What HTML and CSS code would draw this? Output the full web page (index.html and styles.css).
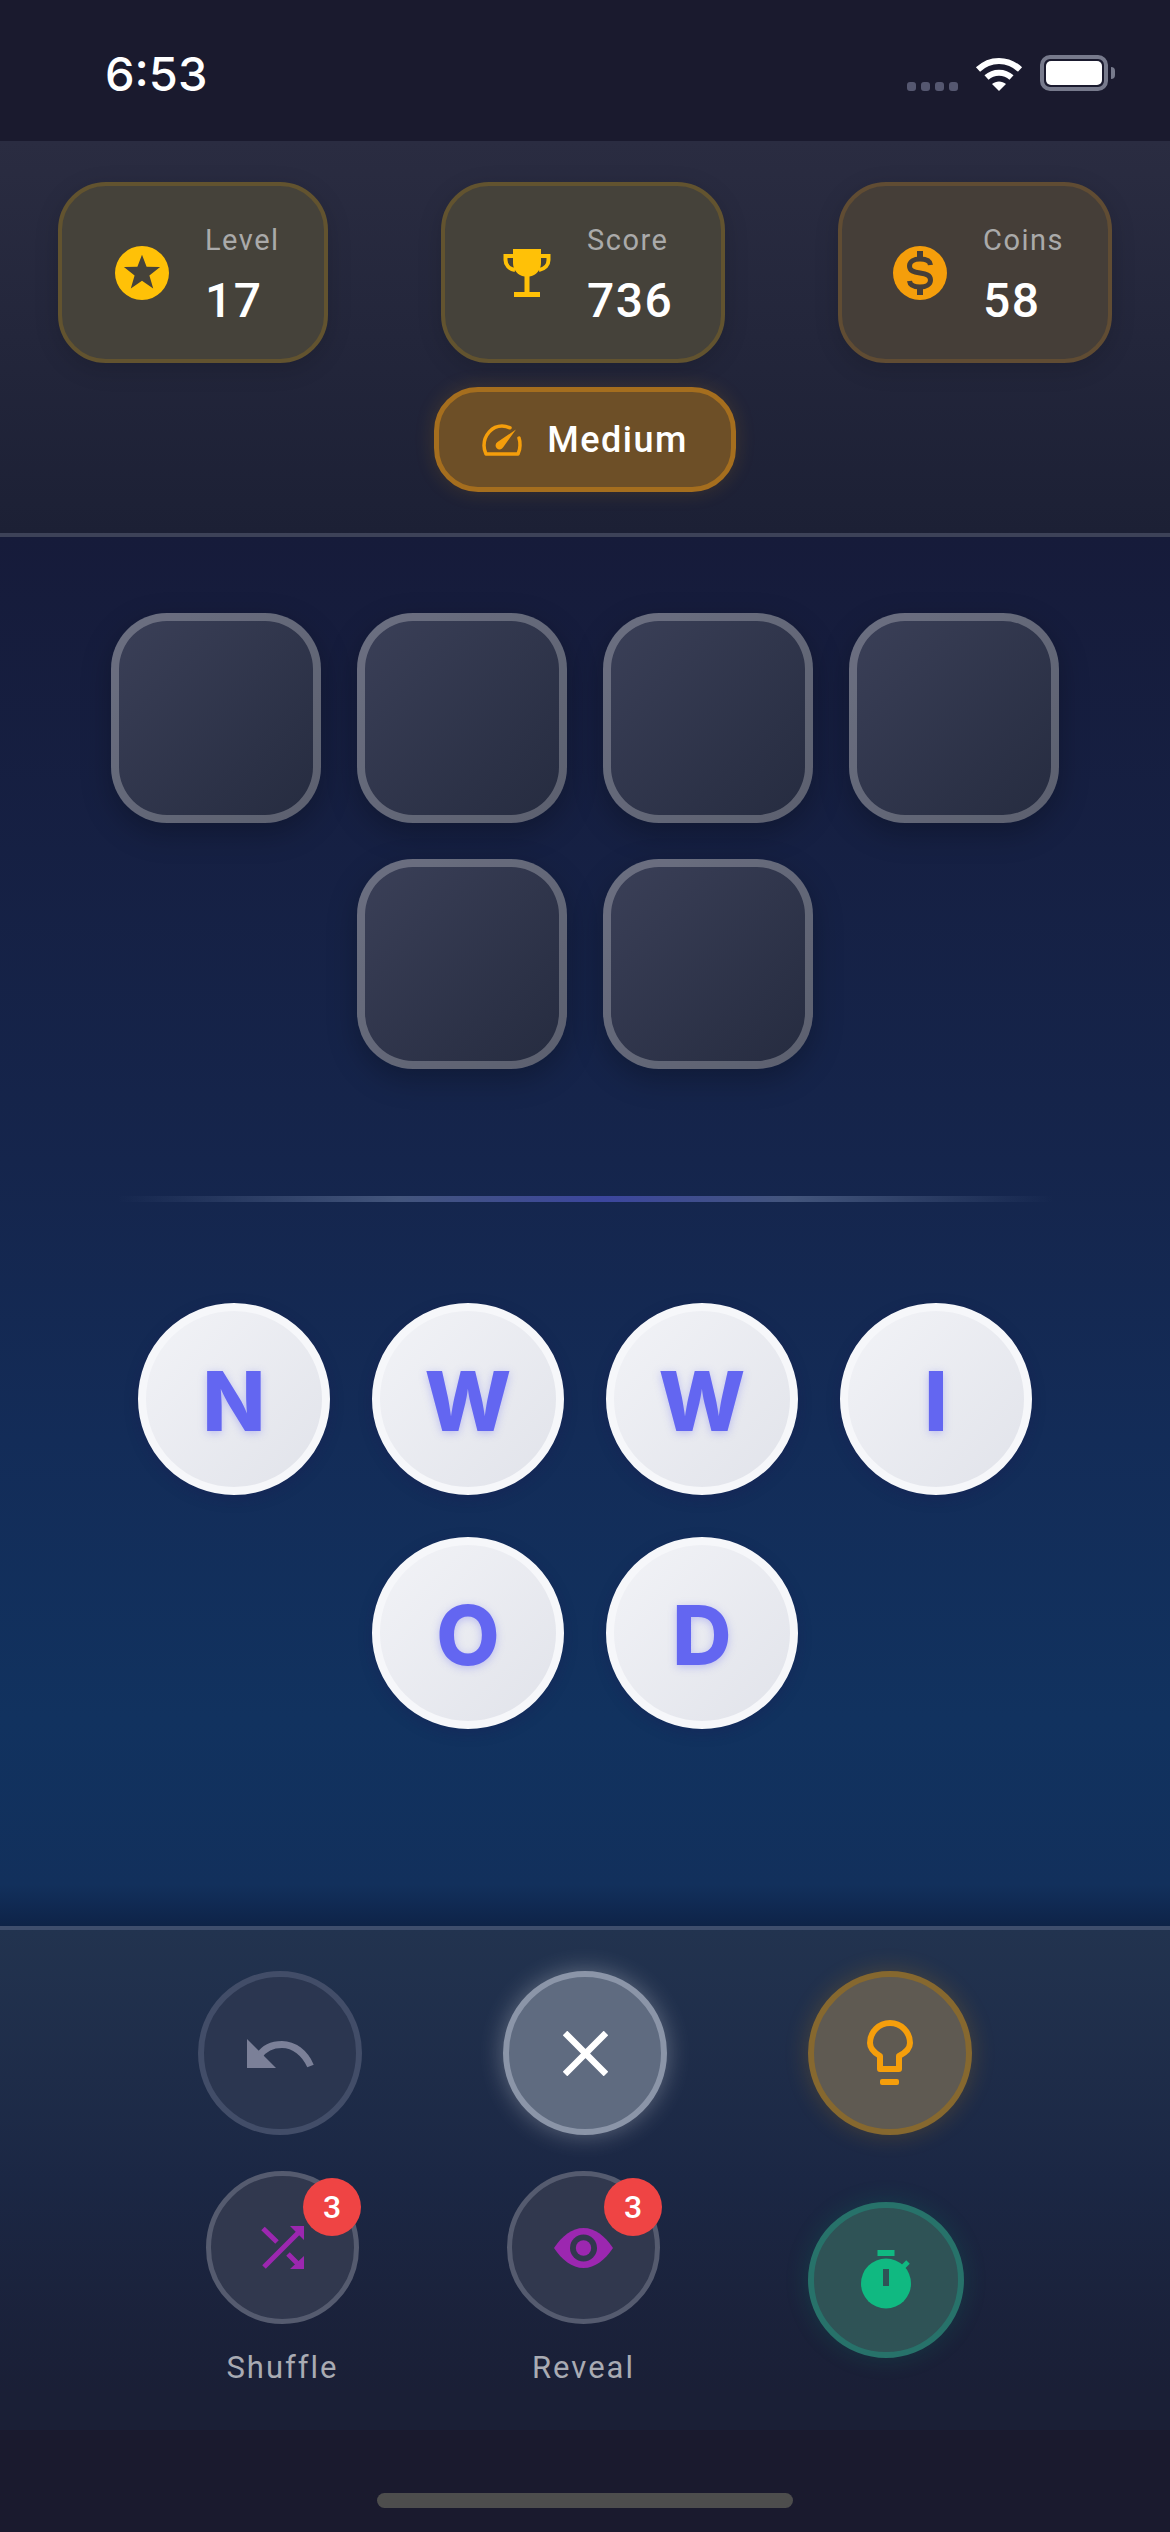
FILE: index.html
```html
<!DOCTYPE html>
<html>
<head>
    <title>Word Game</title>
    <link rel="stylesheet" href="styles.css">
</head>
<body>
    <div class="screen">
        <div class="status-bar">
            <div class="time">6:53</div>
            <div class="status-icons">
                <div class="signal"><span></span><span></span><span></span><span></span></div>
                <svg class="wifi" width="48" height="35" viewBox="0 0 48 35">
                    <path d="M3 13.5C15 2 33 2 45 13.5" fill="none" stroke="#fff" stroke-width="6"/>
                    <path d="M11.5 21.5C18.5 15 29.5 15 36.5 21.5" fill="none" stroke="#fff" stroke-width="6"/>
                    <path d="M17 28C21 24.5 27 24.5 31 28L24 35Z" fill="#fff"/>
                </svg>
                <div class="battery"><div class="battery-level"></div></div>
            </div>
        </div>

        <div class="stats-panel">
            <div class="stats-row">
                <div class="stat-card stat-level">
                    <svg width="54" height="54" viewBox="0 0 54 54">
                        <path fill="#ffc107" fill-rule="evenodd" d="M27 0a27 27 0 1 0 0 54a27 27 0 1 0 0-54ZM27 8.7L31.6 20.7L45.1 21.1L34.4 29.4L38.2 42.5L27 34.8L15.8 42.5L19.6 29.4L8.9 21.1L22.4 20.7Z"/>
                    </svg>
                    <div class="stat-text">
                        <div class="stat-label">Level</div>
                        <div class="stat-value">17</div>
                    </div>
                </div>
                <div class="stat-card stat-score">
                    <svg width="48" height="48" viewBox="0 0 48 48">
                        <path fill="#ffc107" d="M10 0H38V14C38 21 33 26.500 26.500 27.500V43H37V48H11V43H21.500V27.500C15 26.500 10 21 10 14Z"/>
                        <path fill="none" stroke="#ffc107" stroke-width="4" d="M11 7H2.500V11C2.500 16 6 20 12 21M37 7H45.500V11C45.500 16 42 20 36 21"/>
                    </svg>
                    <div class="stat-text">
                        <div class="stat-label">Score</div>
                        <div class="stat-value">736</div>
                    </div>
                </div>
                <div class="stat-card stat-coins">
                    <svg width="54" height="54" viewBox="0 0 54 54">
                        <circle cx="27" cy="27" r="27" fill="#f59e0b"/>
                        <path fill="none" stroke="#453e38" stroke-width="5" d="M37.500 19C37 14.500 32.500 13 27 13C21 13 16.500 15.500 16.500 20C16.500 25 21 26 27 27C33 28 37.500 29 37.500 34C37.500 38.500 33 41 27 41C21.500 41 17 39.500 16.500 35"/>
                        <path fill="#453e38" d="M24 5H30V13H24ZM24 41H30V49H24Z"/>
                    </svg>
                    <div class="stat-text">
                        <div class="stat-label">Coins</div>
                        <div class="stat-value">58</div>
                    </div>
                </div>
            </div>
            <div class="difficulty">
                <svg width="40" height="32" viewBox="0 0 40 32">
                    <path fill="none" stroke="#f59e0b" stroke-width="3.500" stroke-linejoin="round" stroke-linecap="round" d="M28 3.800C25.500 2.600 23 2 20 2C10 2 2 11 2 21.500C2 24.500 2.500 27 4 30H36C37.500 27 38 24.500 38 21.500C38 19 37.800 16 37 14"/>
                    <path fill="#f59e0b" d="M34 5.500L21 23.500A4 4 0 1 1 15.500 18Z"/>
                </svg>
                <span>Medium</span>
            </div>
        </div>

        <div class="board">
            <div class="tile-row">
                <div class="tile"></div>
                <div class="tile"></div>
                <div class="tile"></div>
                <div class="tile"></div>
            </div>
            <div class="tile-row">
                <div class="tile"></div>
                <div class="tile"></div>
            </div>

            <div class="divider"></div>

            <div class="letter-grid">
                <div class="letter-row">
                    <div class="letter">N</div>
                    <div class="letter">W</div>
                    <div class="letter">W</div>
                    <div class="letter">I</div>
                </div>
                <div class="letter-row">
                    <div class="letter">O</div>
                    <div class="letter">D</div>
                </div>
            </div>
        </div>

        <div class="controls">
            <div class="control-row">
                <div class="round-btn btn-undo">
                    <svg width="67" height="29" viewBox="0 0 67 29">
                        <path fill="#7b8098" d="M0 0V29H29Z"/>
                        <path fill="none" stroke="#7b8098" stroke-width="7" d="M12 17C18 8 27 5.500 35 5.500C47 5.500 58 14 63.500 27"/>
                    </svg>
                </div>
                <div class="round-btn btn-clear">
                    <svg width="45" height="45" viewBox="0 0 45 45">
                        <path fill="none" stroke="#fff" stroke-width="6.500" d="M2 2L43 43M43 2L2 43"/>
                    </svg>
                </div>
                <div class="round-btn btn-hint">
                    <svg width="46" height="66" viewBox="0 0 46 66">
                        <path fill="none" stroke="#f59e0b" stroke-width="6" stroke-linejoin="round" d="M13 36C7 32.500 3 28 3 23A20 20 0 1 1 43 23C43 28 39 32.500 32 36V49H13Z"/>
                        <rect x="13" y="59" width="19" height="6" rx="2" fill="#f59e0b"/>
                    </svg>
                </div>
            </div>
            <div class="powerup-row">
                <div class="powerup">
                    <div class="powerup-btn">
                        <svg width="43" height="43" viewBox="0 0 43 43">
                            <path fill="none" stroke="#9c27b0" stroke-width="5" d="M3 41L38 6M2 2.500L16 16M27 28L40 41"/>
                            <path fill="#9c27b0" d="M29 0H43V14ZM43 30V43H29Z"/>
                        </svg>
                        <div class="badge">3</div>
                    </div>
                    <div class="powerup-label">Shuffle</div>
                </div>
                <div class="powerup">
                    <div class="powerup-btn">
                        <svg width="59" height="40" viewBox="0 0 59 40">
                            <path fill="#9c27b0" d="M0 20C8 8 18 0 29.500 0C41 0 51 8 59 20C51 32 41 40 29.500 40C18 40 8 32 0 20Z"/>
                            <circle cx="29.500" cy="20" r="13.500" fill="#31384e"/>
                            <circle cx="29.500" cy="20" r="7.700" fill="#9c27b0"/>
                        </svg>
                        <div class="badge">3</div>
                    </div>
                    <div class="powerup-label">Reveal</div>
                </div>
                <div class="powerup">
                    <div class="round-btn btn-timer">
                        <svg width="50" height="59" viewBox="0 0 50 59">
                            <rect x="16.500" y="0" width="17" height="6" fill="#10b981"/>
                            <circle cx="25" cy="33.500" r="25" fill="#10b981"/>
                            <path fill="none" stroke="#10b981" stroke-width="5" d="M40 19L47 12"/>
                            <rect x="22" y="19" width="6" height="17" fill="#2f5356"/>
                        </svg>
                    </div>
                </div>
            </div>
        </div>

        <div class="home-area">
            <div class="home-indicator"></div>
        </div>
    </div>
</body>
</html>
```

FILE: styles.css
```css
body {
    margin: 0;
    background-color: #1a1a2e;
    font-family: Roboto, "Liberation Sans", sans-serif;
    color: #fff;
}

.screen {
    display: flex;
    flex-direction: column;
    height: 100vh;
}

/* Status bar */
.status-bar {
    height: 141px;
    box-sizing: border-box;
    padding: 0 62px 50px 105px;
    display: flex;
    justify-content: space-between;
    align-items: flex-end;
    background-color: #1a1a2e;
}

.time {
    font-family: Inter, sans-serif;
    font-size: 47px;
    font-weight: 500;
    line-height: 34px;
}

.status-icons {
    display: flex;
    align-items: flex-end;
    gap: 17px;
}

.signal {
    display: flex;
    gap: 5px;
}

.signal span {
    width: 9px;
    height: 9px;
    border-radius: 3px;
    background-color: #555770;
}

.battery {
    position: relative;
    width: 68px;
    height: 36px;
    box-sizing: border-box;
    border: 4px solid #777a8c;
    border-radius: 10px;
    padding: 2px;
}

.battery::after {
    content: "";
    position: absolute;
    right: -11px;
    top: 8px;
    width: 4px;
    height: 12px;
    border-radius: 0 6px 6px 0;
    background-color: #777a8c;
}

.battery-level {
    height: 100%;
    background-color: #fff;
    border-radius: 5px;
}

/* Stats */
.stats-panel {
    padding: 41px 58px;
    border-bottom: 4px solid #3d4258;
    background: linear-gradient(180deg, #2a2c41, #1c2035);
    display: flex;
    flex-direction: column;
    align-items: center;
    gap: 24px;
}

.stats-row {
    align-self: stretch;
    display: grid;
    grid-template-columns: 270px 284px 274px;
    justify-content: space-between;
}

.stat-card {
    height: 181px;
    box-sizing: border-box;
    border: 4px solid #62532f;
    border-radius: 48px;
    background-color: #45423a;
    box-shadow: 0 6px 24px rgba(0, 0, 0, 0.15);
    display: flex;
    align-items: center;
    justify-content: center;
    gap: 36px;
}

.stat-coins {
    border-color: #604c33;
    background-color: #453e38;
}

.stat-text {
    width: 66px;
    margin-top: 3px;
}

.stat-score .stat-text {
    width: 76px;
}

.stat-coins .stat-text {
    width: 74px;
}

.stat-label {
    font-size: 29px;
    line-height: 36px;
    letter-spacing: 1.5px;
    color: #aaaaaa;
}

.stat-value {
    margin-top: 17px;
    font-size: 48px;
    font-weight: 500;
    line-height: 52px;
    letter-spacing: 1.5px;
}

.difficulty {
    width: 302px;
    height: 105px;
    box-sizing: border-box;
    border: 5px solid #a56e1e;
    border-radius: 44px;
    background-color: #6d4f27;
    box-shadow: 0 0 20px rgba(245, 158, 11, 0.15);
    display: flex;
    align-items: center;
    justify-content: center;
    gap: 25px;
    font-size: 36px;
    font-weight: 500;
    letter-spacing: 1.5px;
}

/* Board */
.board {
    flex: 1;
    padding-top: 76px;
    background: linear-gradient(180deg, #161b3a 0%, #15254c 45%, #132c58 65%, #11325f 85%, #12305c 97%, #0e2348 100%);
}

.tile-row {
    display: flex;
    justify-content: center;
    gap: 36px;
    margin-bottom: 36px;
}

.tile {
    width: 210px;
    height: 210px;
    box-sizing: border-box;
    border: 8px solid rgba(255, 255, 255, 0.25);
    border-radius: 56px;
    background: linear-gradient(135deg, #3b4058, #252b3f) border-box;
    box-shadow: 0 10px 30px rgba(0, 0, 0, 0.25);
}

.divider {
    height: 6px;
    margin: 127px 10% 0;
    background: linear-gradient(90deg, transparent, #43557c 30%, #3c469e 52%, #43557c 72%, transparent);
}

.letter-grid {
    margin-top: 101px;
    display: flex;
    flex-direction: column;
    gap: 42px;
}

.letter-row {
    display: flex;
    justify-content: center;
    gap: 42px;
}

.letter {
    width: 192px;
    height: 192px;
    box-sizing: border-box;
    border: 8px solid #f6f7fa;
    border-radius: 50%;
    background: linear-gradient(135deg, #f2f3f7, #e1e3ea);
    box-shadow: 0 4px 14px rgba(30, 20, 80, 0.25);
    display: flex;
    align-items: center;
    justify-content: center;
    padding-top: 5px;
    font-family: Inter, sans-serif;
    font-size: 82px;
    font-weight: 800;
    color: #6366f1;
    text-shadow: 0 2px 8px rgba(99, 102, 241, 0.35);
}

/* Bottom controls */
.controls {
    padding: 41px 0 42px;
    border-top: 4px solid #3f4e6d;
    background: linear-gradient(180deg, #22334f, #1b2744 50%, #1a1f36 92%);
}

.control-row {
    display: flex;
    justify-content: center;
    gap: 141px;
}

.round-btn {
    width: 164px;
    height: 164px;
    box-sizing: border-box;
    border-radius: 50%;
    border: 6px solid #424d68;
    background-color: #2b3650;
    display: flex;
    align-items: center;
    justify-content: center;
}

.btn-clear {
    border-color: #8b95a8;
    background-color: #5f6b80;
    box-shadow: 0 0 24px rgba(255, 255, 255, 0.3);
}

.btn-hint {
    border-color: #86682f;
    background-color: #5f5a52;
    box-shadow: 0 0 24px rgba(245, 158, 11, 0.2);
}

.btn-timer {
    width: 156px;
    height: 156px;
    border-color: #27726a;
    background-color: #2f5356;
    box-shadow: 0 0 24px rgba(16, 185, 129, 0.15);
}

.powerup-row {
    margin-top: 36px;
    display: grid;
    grid-template-columns: 301px 301px 304px;
    justify-content: center;
    align-items: center;
}

.powerup {
    display: flex;
    flex-direction: column;
    align-items: center;
}

.powerup-btn {
    position: relative;
    width: 153px;
    height: 153px;
    box-sizing: border-box;
    border-radius: 50%;
    border: 5px solid #555b6f;
    background-color: #31384e;
    display: flex;
    align-items: center;
    justify-content: center;
}

.badge {
    position: absolute;
    top: 2px;
    right: -7px;
    width: 58px;
    height: 58px;
    border-radius: 50%;
    background-color: #ef4444;
    display: flex;
    align-items: center;
    justify-content: center;
    font-size: 32px;
    font-weight: 500;
}

.powerup-label {
    margin-top: 24px;
    font-size: 31px;
    line-height: 40px;
    letter-spacing: 2px;
    color: #a9abb3;
}

/* Home indicator */
.home-area {
    height: 102px;
    box-sizing: border-box;
    padding-top: 63px;
    display: flex;
    justify-content: center;
    background-color: #1a1a2e;
}

.home-indicator {
    width: 416px;
    height: 15px;
    border-radius: 8px;
    background-color: #4d4d4d;
}
```
